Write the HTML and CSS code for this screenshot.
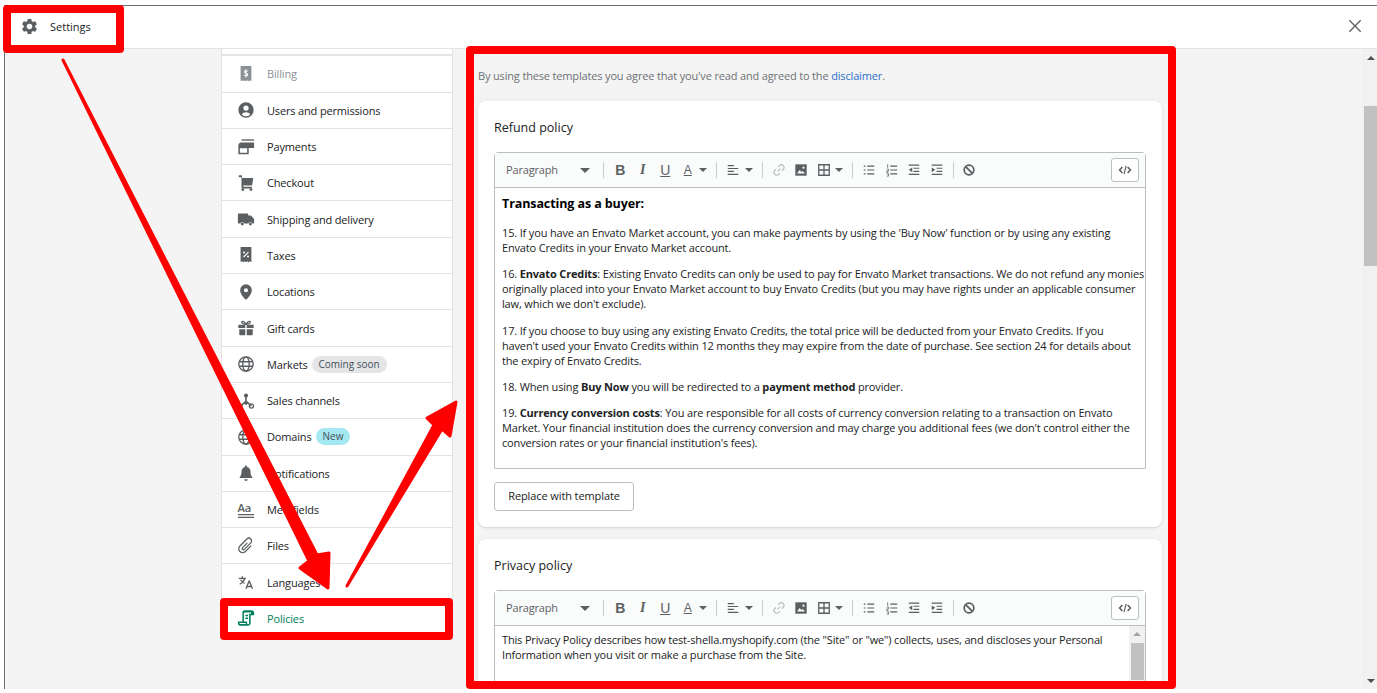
FILE: index.html
```html
<!DOCTYPE html>
<html lang="en">
<head>
	<meta charset="UTF-8">
	<title>Settings - Policies</title>
	<link rel="stylesheet" href="styles.css">
</head>
<body>
<svg class="defs" width="0" height="0">
	<symbol id="i-link" viewBox="0 0 16 16"><path d="M6.5 9.5l3-3M7 4.5l1.5-1.5a3 3 0 0 1 4.300 4.300L11.300 8.800M9 11.500l-1.500 1.500a3 3 0 0 1-4.300-4.300L4.700 7.200" fill="none" stroke="currentColor" stroke-width="1.300"/></symbol>
	<symbol id="i-image" viewBox="0 0 16 16"><path d="M1.500 1.500h13v13h-13z" fill="currentColor"/><path d="M3.500 12l3-4 2 2.400 1.500-1.400 2.500 3z" fill="#fff"/><circle cx="10.800" cy="5.300" r="1.200" fill="#fff"/></symbol>
	<symbol id="i-table" viewBox="0 0 16 16"><path d="M2 2h12v12H2zM8 2v12M2 8h12" fill="none" stroke="currentColor" stroke-width="1.500"/></symbol>
	<symbol id="i-align" viewBox="0 0 16 16"><path d="M2 3h7M2 6.300h12M2 9.600h7M2 13h12" stroke="currentColor" stroke-width="1.300"/></symbol>
	<symbol id="i-ul" viewBox="0 0 16 16"><path d="M6 3.500h8M6 8h8M6 12.500h8M2 3.500h2M2 8h2M2 12.500h2" stroke="currentColor" stroke-width="1.300"/></symbol>
	<symbol id="i-ol" viewBox="0 0 16 16"><path d="M6 3.500h8M6 8h8M6 12.500h8" stroke="currentColor" stroke-width="1.300"/><path d="M3 1.500v4M2 7h2v2H2v2h2M2 12.500h2v2.500H2" fill="none" stroke="currentColor" stroke-width=".9"/></symbol>
	<symbol id="i-out" viewBox="0 0 16 16"><path d="M2 2.500h12M7.500 6h6.500M7.500 9.500h6.500M2 13h12" stroke="currentColor" stroke-width="1.400"/><path d="M6 5v5.500L2 7.700z" fill="currentColor"/></symbol>
	<symbol id="i-in" viewBox="0 0 16 16"><path d="M2 2.500h12M7.500 6h6.500M7.500 9.500h6.500M2 13h12" stroke="currentColor" stroke-width="1.400"/><path d="M2 5v5.500l4-2.800z" fill="currentColor"/></symbol>
	<symbol id="i-clear" viewBox="0 0 16 16"><circle cx="8" cy="8" r="5.500" fill="none" stroke="currentColor" stroke-width="2"/><path d="M4.200 4.200l7.600 7.600" stroke="currentColor" stroke-width="2"/></symbol>
	<symbol id="i-code" viewBox="0 0 16 16"><path d="M5 4.500L1.800 8 5 11.500M11 4.500L14.200 8 11 11.500" fill="none" stroke="currentColor" stroke-width="1.800"/><path d="M9.300 3.300L6.900 12.700" stroke="currentColor" stroke-width="1.300"/></symbol>
</svg>

<div class="window">
	<header class="topbar">
		<div class="topbar-title">
			<svg class="gear" viewBox="0 0 24 24"><path d="M19.140 12.940c.04-.3.06-.61.06-.94 0-.32-.02-.64-.07-.94l2.030-1.580c.18-.14.23-.41.12-.61l-1.920-3.320c-.12-.22-.37-.29-.59-.22l-2.390.96c-.5-.38-1.030-.7-1.620-.94l-.36-2.540c-.04-.24-.24-.41-.48-.41h-3.840c-.24 0-.43.17-.47.41l-.36 2.540c-.59.24-1.130.57-1.620.94l-2.390-.96c-.22-.08-.47 0-.59.22L2.740 8.870c-.12.21-.08.47.12.61l2.030 1.580c-.05.3-.09.63-.09.94s.02.64.07.94l-2.030 1.580c-.18.14-.23.41-.12.61l1.920 3.320c.12.22.37.29.59.22l2.390-.96c.5.38 1.030.7 1.620.94l.36 2.540c.05.24.24.41.48.41h3.840c.24 0 .44-.17.47-.41l.36-2.540c.59-.24 1.130-.56 1.620-.94l2.390.96c.22.08.47 0 .59-.22l1.920-3.320c.12-.22.07-.47-.12-.61l-2.010-1.580zM12 15.600c-1.980 0-3.600-1.620-3.600-3.600s1.620-3.600 3.600-3.600 3.600 1.620 3.600 3.600-1.620 3.600-3.600 3.600z"/></svg>
			<span>Settings</span>
		</div>
		<svg class="close" viewBox="0 0 16 16"><path d="M1.500 1.500l13 13M14.500 1.500l-13 13"/></svg>
	</header>

	<div class="main">
		<div class="pane">
			<nav class="sidebar">
				<div class="nav-stub"></div>
				<a class="nav-item muted"><svg class="nav-icon" viewBox="0 0 20 20"><path d="M4 1h12v17l-1.500-1-1.500 1-1.500-1-1.500 1-1.500-1-1.500 1-1.500-1L4 18z"/><path d="M12 7c-.4-.8-3.800-1-3.800.7 0 1.900 3.800 1 3.800 3 0 1.700-3.400 1.500-3.900.5M10 4.800v9" fill="none" stroke="#fff" stroke-width="1.200"/></svg>Billing</a>
				<a class="nav-item"><svg class="nav-icon" viewBox="0 0 20 20"><path fill-rule="evenodd" d="M10 1.500a8.500 8.500 0 1 1 0 17 8.500 8.500 0 0 1 0-17zm0 3.500a2.900 2.900 0 1 0 0 5.800 2.900 2.900 0 0 0 0-5.800zM5.300 14.900a6.200 6.200 0 0 0 9.400 0c-.8-1.500-2.700-2.500-4.700-2.500s-3.900 1-4.700 2.500z"/></svg>Users and permissions</a>
				<a class="nav-item"><svg class="nav-icon" viewBox="0 0 20 20"><path d="M5 1.500h14V3H5z"/><path fill-rule="evenodd" d="M4.500 5H19v6h-6v7H1.500V8.500C1.500 6.500 2.800 5 4.500 5zM3.200 11.500v5h8.100v-5z"/></svg>Payments</a>
				<a class="nav-item"><svg class="nav-icon" viewBox="0 0 20 20"><path d="M2 1.500h2.600c.5 0 .8.3.9.8L5.800 4.500H18l-1 7.500c-.1.500-.5.800-1 .800H7v1.400h9.500V16H6c-.6 0-1-.4-1-1V3.500H2z"/><circle cx="6.500" cy="17.300" r="1.600"/><circle cx="15.500" cy="17.300" r="1.600"/></svg>Checkout</a>
				<a class="nav-item"><svg class="nav-icon" viewBox="0 0 20 20"><path d="M1 5c0-.6.4-1 1-1h9.500c.6 0 1 .4 1 1v1h3l3.500 4v4.500c0 .3-.2.500-.5.500H17a2.200 2.200 0 0 0-4.300 0H8a2.200 2.200 0 0 0-4.300 0H2c-.6 0-1-.4-1-1z"/><circle cx="5.900" cy="15.500" r="1.600"/><circle cx="14.900" cy="15.500" r="1.600"/></svg>Shipping and delivery</a>
				<a class="nav-item"><svg class="nav-icon" viewBox="0 0 20 20"><path d="M4 1h12v17l-1.500-1-1.500 1-1.500-1-1.500 1-1.500-1-1.500 1-1.500-1L4 18z"/><path d="M7.300 12.200l5.400-5.400" stroke="#fff" stroke-width="1.300"/><circle cx="7.800" cy="7.300" r="1.100" fill="#fff"/><circle cx="12.200" cy="11.700" r="1.100" fill="#fff"/></svg>Taxes</a>
				<a class="nav-item"><svg class="nav-icon" viewBox="0 0 20 20"><path fill-rule="evenodd" d="M10 1.500a6.500 6.500 0 0 1 6.500 6.500c0 3.500-3.500 8-5.700 10-.5.400-1.100.4-1.600 0C7 16 3.500 11.500 3.500 8A6.500 6.500 0 0 1 10 1.500zm0 4.300a2.300 2.300 0 1 0 0 4.600 2.300 2.300 0 0 0 0-4.600z"/></svg>Locations</a>
				<a class="nav-item"><svg class="nav-icon" viewBox="0 0 20 20"><path d="M1.500 6.500h7.700V10H1.500zM10.800 6.500h7.700V10h-7.700zM2.500 11.300h6.700V18H3.500c-.6 0-1-.4-1-1zM10.800 11.300h6.700V17c0 .6-.4 1-1 1h-5.700z"/><path d="M10 6C8.500 2.800 6 2 5.300 3.200S6.800 6 10 6zm0 0c1.500-3.200 4-4 4.700-2.800S13.200 6 10 6z" fill="none" stroke="currentColor" stroke-width="1.400"/></svg>Gift cards</a>
				<a class="nav-item"><svg class="nav-icon" viewBox="0 0 20 20"><g fill="none" stroke="currentColor" stroke-width="1.500"><circle cx="10" cy="10" r="8"/><ellipse cx="10" cy="10" rx="3.600" ry="8"/><path d="M2.500 7.500h15M2.500 12.500h15"/></g></svg>Markets<span class="badge">Coming soon</span></a>
				<a class="nav-item"><svg class="nav-icon" viewBox="0 0 20 20"><circle cx="10" cy="4" r="2.300"/><circle cx="4" cy="15.500" r="2.300"/><circle cx="16" cy="15.500" r="2.300" fill="none" stroke="currentColor" stroke-width="1.400"/><path d="M10 5v5.500l-6 5M10 10.500l6 5" fill="none" stroke="currentColor" stroke-width="1.800"/><path d="M7 12.500l3-3 3 3-3 2z"/></svg>Sales channels</a>
				<a class="nav-item"><svg class="nav-icon" viewBox="0 0 20 20"><g fill="none" stroke="currentColor" stroke-width="1.500"><circle cx="10" cy="10" r="8"/><ellipse cx="10" cy="10" rx="3.600" ry="8"/><path d="M2.500 7.500h15M2.500 12.500h15"/></g></svg>Domains<span class="badge new">New</span></a>
				<a class="nav-item"><svg class="nav-icon" viewBox="0 0 20 20"><path d="M10 1.500c.6 0 1 .4 1 1v.7c2.600.5 4 2.600 4 5.300 0 3 .8 4.700 2 6V15.500H3V14.500c1.200-1.300 2-3 2-6 0-2.700 1.400-4.800 4-5.300v-.7c0-.6.400-1 1-1zM8 17h4a2 2 0 0 1-4 0z"/></svg>Notifications</a>
				<a class="nav-item"><svg class="nav-icon" viewBox="0 0 20 20"><path d="M1 14.500h18v1.400H1zM1 17.500h18v1.400H1z"/><text class="aa" x="0.500" y="12">Aa</text></svg>Metafields</a>
				<a class="nav-item"><svg class="nav-icon" viewBox="0 0 20 20"><path d="M11.500 6.500l-5.300 5.300a1.300 1.300 0 0 0 1.900 1.900l7.200-7.200a3 3 0 0 0-4.300-4.300L3.200 10a4.300 4.300 0 0 0 6.100 6.100l6.500-6.500" fill="none" stroke="currentColor" stroke-width="1.400"/></svg>Files</a>
				<a class="nav-item"><svg class="nav-icon" viewBox="0 0 20 20"><path d="M2 6h8M6 3.500V6M8.500 6C8 9 6 11 3 12.500M4 7.500c1 2 2.500 3.300 4.500 4M13.500 8.500L10 17.500M13.500 8.500l3.700 9M11 15h5.200" fill="none" stroke="currentColor" stroke-width="1.500"/></svg>Languages</a>
				<a class="nav-item active"><svg class="nav-icon" viewBox="0 0 20 20"><path fill-rule="evenodd" d="M6 4C6 2.500 7 1.500 8.500 1.500h7.700c1.500 0 2.800 1 2.800 2.500v3h-3.800v8.300c0 1.700-1 3.200-3 3.200H3.500C2 18.500 1 17.300 1 15.800V14h5zm9.200 1.500V3.200c-.5 0-1 0-1.300.6H8.700c-.6 0-1 .5-1 1.200V14h3.500v1.500c0 1 .3 1.500 1 1.500s1.200-.5 1.200-1.700V5zM2.700 15.600c0 .7.400 1.200 1 1.200h6.200c-.2-.3-.3-.7-.3-1.200zM9.300 6.500h3v1.500h-3zM9.300 9.500h3V11h-3z"/></svg>Policies</a>
			</nav>

			<section class="content">
				<p class="notice">By using these templates you agree that you've read and agreed to the <a class="link">disclaimer</a>.</p>

				<div class="card">
					<h2 class="card-title">Refund policy</h2>
					<div class="editor">
						<div class="toolbar">
							<div class="tb-select"><span class="tb-label">Paragraph</span><i class="caret"></i></div>
							<i class="tb-sep"></i>
							<span class="tb-btn bold">B</span>
							<span class="tb-btn ital">I</span>
							<span class="tb-btn under">U</span>
							<span class="tb-btn under small">A</span><i class="caret tb-caret"></i>
							<i class="tb-sep wide"></i>
							<span class="tb-btn"><svg class="tb-icon"><use href="#i-align"/></svg></span><i class="caret tb-caret"></i>
							<i class="tb-sep wide"></i>
							<span class="tb-btn faded"><svg class="tb-icon"><use href="#i-link"/></svg></span>
							<span class="tb-btn"><svg class="tb-icon"><use href="#i-image"/></svg></span>
							<span class="tb-btn"><svg class="tb-icon"><use href="#i-table"/></svg></span><i class="caret tb-caret"></i>
							<i class="tb-sep wide"></i>
							<span class="tb-btn"><svg class="tb-icon"><use href="#i-ul"/></svg></span>
							<span class="tb-btn"><svg class="tb-icon"><use href="#i-ol"/></svg></span>
							<span class="tb-btn"><svg class="tb-icon"><use href="#i-out"/></svg></span>
							<span class="tb-btn"><svg class="tb-icon"><use href="#i-in"/></svg></span>
							<i class="tb-sep end"></i>
							<span class="tb-btn"><svg class="tb-icon"><use href="#i-clear"/></svg></span>
							<span class="code-btn"><svg class="tb-icon"><use href="#i-code"/></svg></span>
						</div>
						<div class="editor-body">
							<h3 class="doc-heading">Transacting as a buyer:</h3>
							<p>15. If you have an Envato Market account, you can make payments by using the 'Buy Now' function or by using any existing Envato Credits in your Envato Market account.</p>
							<p>16. <b>Envato Credits</b>: Existing Envato Credits can only be used to pay for Envato Market transactions. We do not refund any monies originally placed into your Envato Market account to buy Envato Credits (but you may have rights under an applicable consumer law, which we don't exclude).</p>
							<p>17. If you choose to buy using any existing Envato Credits, the total price will be deducted from your Envato Credits. If you<br>haven't used your Envato Credits within 12 months they may expire from the date of purchase. See section 24 for details about the expiry of Envato Credits.</p>
							<p>18. When using <b>Buy Now</b> you will be redirected to a <b>payment method</b> provider.</p>
							<p>19. <b>Currency conversion costs</b>: You are responsible for all costs of currency conversion relating to a transaction on Envato Market. Your financial institution does the currency conversion and may charge you additional fees (we don't control either the conversion rates or your financial institution's fees).</p>
						</div>
					</div>
					<button class="btn" type="button">Replace with template</button>
				</div>

				<div class="card">
					<h2 class="card-title">Privacy policy</h2>
					<div class="editor">
						<div class="toolbar">
							<div class="tb-select"><span class="tb-label">Paragraph</span><i class="caret"></i></div>
							<i class="tb-sep"></i>
							<span class="tb-btn bold">B</span>
							<span class="tb-btn ital">I</span>
							<span class="tb-btn under">U</span>
							<span class="tb-btn under small">A</span><i class="caret tb-caret"></i>
							<i class="tb-sep wide"></i>
							<span class="tb-btn"><svg class="tb-icon"><use href="#i-align"/></svg></span><i class="caret tb-caret"></i>
							<i class="tb-sep wide"></i>
							<span class="tb-btn faded"><svg class="tb-icon"><use href="#i-link"/></svg></span>
							<span class="tb-btn"><svg class="tb-icon"><use href="#i-image"/></svg></span>
							<span class="tb-btn"><svg class="tb-icon"><use href="#i-table"/></svg></span><i class="caret tb-caret"></i>
							<i class="tb-sep wide"></i>
							<span class="tb-btn"><svg class="tb-icon"><use href="#i-ul"/></svg></span>
							<span class="tb-btn"><svg class="tb-icon"><use href="#i-ol"/></svg></span>
							<span class="tb-btn"><svg class="tb-icon"><use href="#i-out"/></svg></span>
							<span class="tb-btn"><svg class="tb-icon"><use href="#i-in"/></svg></span>
							<i class="tb-sep end"></i>
							<span class="tb-btn"><svg class="tb-icon"><use href="#i-clear"/></svg></span>
							<span class="code-btn"><svg class="tb-icon"><use href="#i-code"/></svg></span>
						</div>
						<div class="editor-body scrolled">
							<div class="scrolled-text">
								<p>This Privacy Policy describes how test-shella.myshopify.com (the "Site" or "we") collects, uses, and discloses your Personal Information when you visit or make a purchase from the Site.</p>
							</div>
							<div class="mini-scroll"><i class="arrow-up light"></i><i class="mini-thumb"></i></div>
						</div>
					</div>
				</div>
			</section>
		</div>

		<div class="scrollbar">
			<i class="arrow-up"></i>
			<i class="thumb"></i>
			<i class="arrow-down"></i>
		</div>
	</div>
</div>

<!-- red annotations drawn on top of the screenshot -->
<div class="mark mark-settings"></div>
<div class="mark mark-policies"></div>
<div class="mark mark-content"></div>
<svg class="arrows" viewBox="0 0 1377 693">
	<path d="M63 60L317 555L329 553L328 588L300 568L309 561z"/>
	<path d="M347 586L434 425L427 418L456 402L450 436L442 429z"/>
</svg>
</body>
</html>
```

FILE: styles.css
```css
* {
	box-sizing: border-box;
}

html, body {
	margin: 0;
	height: 693px;
	overflow: hidden;
}

body {
	position: relative;
	background: #fff;
	padding: 5px 0 4px 4px;
	font-family: "Open Sans", "Noto Sans", sans-serif;
	font-size: 11px;
	letter-spacing: -.16px;
	color: #202223;
}

.defs {
	position: absolute;
}

.window {
	height: 684px;
	border-top: 1px solid #6d7175;
	border-left: 1px solid #6d7175;
	display: flex;
	flex-direction: column;
}

/* top bar */
.topbar {
	height: 43px;
	flex: none;
	display: flex;
	align-items: center;
	justify-content: space-between;
	padding: 0 15px 2px 15px;
	border-bottom: 1px solid #e1e3e5;
	letter-spacing: 0;
}

.topbar-title {
	display: flex;
	align-items: center;
	gap: 11px;
}

.gear {
	width: 19px;
	height: 19px;
	fill: #5c5f62;
}

.close {
	width: 14px;
	height: 14px;
	stroke: #5c5f62;
	stroke-width: 1.500;
	fill: none;
}

.main {
	flex: 1;
	min-height: 0;
	display: flex;
	background: #f4f4f4;
}

.pane {
	flex: 1;
	min-width: 0;
	display: flex;
	padding-left: 216px;
	overflow: hidden;
}

/* left nav */
.sidebar {
	width: 232px;
	flex: none;
	align-self: flex-start;
	background: #fff;
	border-left: 1px solid #e1e3e5;
	border-right: 1px solid #e1e3e5;
}

.nav-stub {
	height: 7.300px;
	border-bottom: 2px solid #e1e3e5;
}

.nav-item {
	height: 36.300px;
	display: flex;
	align-items: center;
	padding-left: 15px;
	border-bottom: 1px solid #e1e3e5;
	color: #202223;
}

.nav-icon {
	width: 18px;
	height: 18px;
	margin-right: 12px;
	flex: none;
	fill: #5c5f62;
	color: #5c5f62;
}

.aa {
	font-size: 12.500px;
	font-weight: 600;
	font-family: "Open Sans", sans-serif;
}

.muted {
	color: #8c9196;
}

.muted .nav-icon {
	fill: #8c9196;
}

.active {
	color: #008060;
}

.active .nav-icon {
	fill: #008060;
}

.badge {
	margin-left: 4px;
	padding: 0 7px;
	height: 17px;
	line-height: 17px;
	border-radius: 9px;
	background: #e4e5e7;
	font-size: 10px;
	letter-spacing: 0;
	color: #454f5b;
}

.badge.new {
	background: #a4e8f2;
}

/* main column */
.content {
	width: 684px;
	margin-left: 25px;
	flex: none;
}

.notice {
	margin: 19px 0 18px;
	line-height: 15px;
	color: #6d7175;
}

.link {
	color: #2c6ecb;
}

.card {
	background: #fff;
	border-radius: 8px;
	box-shadow: 0 0 5px rgba(23, 24, 24, .05), 0 1px 2px rgba(0, 0, 0, .1);
	padding: 16px;
	margin-bottom: 12px;
}

.card-title {
	margin: 2px 0 16px;
	font-size: 12.500px;
	letter-spacing: 0;
	line-height: 17px;
	font-weight: 500;
}

.editor {
	border: 1px solid #babfc3;
	border-radius: 4px 4px 0 0;
}

.toolbar {
	height: 35px;
	display: flex;
	align-items: center;
	background: #fafbfb;
	border-bottom: 1px solid #babfc3;
	color: #5c5f62;
}

.tb-select {
	width: 108px;
	flex: none;
	padding: 0 13px 0 11px;
	display: flex;
	align-items: center;
	justify-content: space-between;
}

.tb-label {
	padding-bottom: 2px;
}

.caret {
	width: 0;
	height: 0;
	border-left: 5px solid transparent;
	border-right: 5px solid transparent;
	border-top: 5px solid #5c5f62;
}

.tb-caret {
	border-left-width: 4px;
	border-right-width: 4px;
	border-top-width: 4px;
}

.tb-sep {
	width: 1px;
	height: 16px;
	flex: none;
	margin: 0 5px 0 0;
	background: #c4cdd5;
}

.tb-sep.wide {
	margin-left: 9px;
}

.tb-sep.end {
	margin: 0 4px 0 5px;
}

.tb-btn {
	width: 22.500px;
	flex: none;
	display: flex;
	justify-content: center;
	align-items: center;
	font-family: "Liberation Sans", sans-serif;
	font-size: 14px;
	line-height: 16px;
	letter-spacing: 0;
}

.bold {
	font-weight: bold;
}

.ital {
	font-family: "Liberation Serif", serif;
	font-style: italic;
	font-weight: bold;
}

.under {
	text-decoration: underline;
}

.small {
	font-size: 12px;
}

.faded {
	color: #b5b9bc;
}

.tb-icon {
	width: 14px;
	height: 14px;
}

.code-btn {
	margin-left: auto;
	margin-right: 6px;
	width: 28px;
	height: 24px;
	display: flex;
	align-items: center;
	justify-content: center;
	background: #fff;
	border: 1px solid #babfc3;
	border-radius: 3px;
}

.editor-body {
	height: 280px;
	padding: 7px 0 0 7px;
	background: #fff;
	overflow: hidden;
	line-height: 15px;
}

.editor-body p {
	margin: 0 0 11.250px;
}

.doc-heading {
	margin: 0 0 13px;
	font-size: 12.500px;
	letter-spacing: -.1px;
	line-height: 17px;
	font-weight: 700;
	color: #000;
}

.editor-body.scrolled {
	display: flex;
	padding: 0;
}

.scrolled-text {
	flex: 1;
	padding: 6px 7px;
}

.mini-scroll {
	width: 16px;
	flex: none;
	background: #f1f1f1;
	display: flex;
	flex-direction: column;
	align-items: center;
	padding-top: 6px;
}

.mini-thumb {
	width: 13px;
	height: 37px;
	margin-top: 7px;
	background: #c1c1c1;
}

.btn {
	display: block;
	margin-top: 13px;
	width: 140px;
	height: 29px;
	padding: 0 0 2px;
	background: #fff;
	border: 1px solid #babfc3;
	border-radius: 3px;
	font-family: inherit;
	font-size: 11px;
	letter-spacing: -.1px;
	color: #202223;
}

/* page scrollbar */
.scrollbar {
	width: 15px;
	flex: none;
	background: #f1f1f1;
	display: flex;
	flex-direction: column;
	align-items: center;
	padding: 7px 0 6px 2px;
}

.thumb {
	width: 13px;
	height: 160px;
	margin-top: 46px;
	background: #c1c1c1;
}

.arrow-up, .arrow-down {
	width: 0;
	height: 0;
	border-left: 4px solid transparent;
	border-right: 4px solid transparent;
}

.arrow-up {
	border-bottom: 4px solid #505050;
}

.arrow-up.light {
	border-bottom-color: #a3a3a3;
}

.arrow-down {
	margin-top: auto;
	border-top: 4px solid #505050;
}

/* annotations */
.mark {
	position: absolute;
	border: 8px solid #f00;
	border-radius: 4px;
}

.mark-settings {
	left: 3px;
	top: 5px;
	width: 121px;
	height: 48px;
}

.mark-policies {
	left: 220px;
	top: 598px;
	width: 233px;
	height: 42px;
}

.mark-content {
	left: 466px;
	top: 46px;
	width: 710px;
	height: 643px;
}

.arrows {
	position: absolute;
	left: 0;
	top: 0;
	width: 1377px;
	height: 693px;
	fill: #f00;
	stroke: #f00;
	stroke-width: 3;
	stroke-linejoin: round;
}
```
